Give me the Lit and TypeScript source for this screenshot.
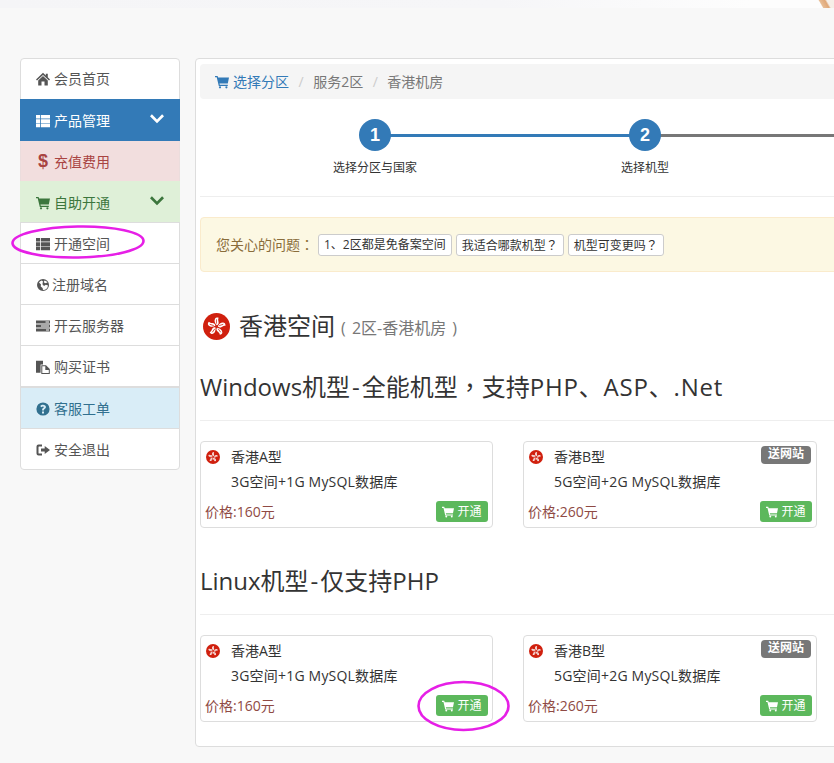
import { LitElement, html, css, svg } from "lit";
import { customElement } from "lit/decorators.js";

const ic = (vb: string, body: unknown, cls = "ic") =>
  html`<svg class=${cls} viewBox=${vb} fill="currentColor" aria-hidden="true">${body}</svg>`;

const icons: Record<string, unknown> = {
  home: svg`<path d="M7 .8 L9.8 3.4 V1.8 H11.8 V5.3 L14 7.4 L13 8.5 L7 2.9 L1 8.5 L0 7.4 Z"/><path d="M2.2 8.6 L7 4.1 L11.8 8.6 V13.4 H8.5 V9.6 H5.5 V13.4 H2.2 Z"/>`,
  thl: svg`<path d="M0 1h4.2v3.6H0zM5 1h9v3.6H5zM0 5.3h4.2v3.6H0zM5 5.3h9v3.6H5zM0 9.6h4.2v3.6H0zM5 9.6h9v3.6H5z"/>`,
  cart: svg`<path d="M0 1h2.6l.5 1.6H14l-1.2 6H4.5l.3 1.2h8v1.2H3.8L1.7 2.2H0z"/><circle cx="5" cy="12.3" r="1.1"/><circle cx="11.4" cy="12.3" r="1.1"/>`,
  globe: svg`<path fill-rule="evenodd" d="M7 1a6 6 0 1 0 0 12A6 6 0 0 0 7 1zM8.6 2.6 7.7 4 9 5.2l2.6-.6a5 5 0 0 0-3-2zM3 4.4 5 6.4 4.7 8.6 6.6 10l.4 2A5 5 0 0 0 12 7.6L9.8 6.8 8 8 6.4 6.2 7 3.6 5.8 2.4A5 5 0 0 0 3 4.4z"/>`,
  tasks: svg`<path fill-rule="evenodd" d="M0 1.6h14v3H0zM9.5 2.6v1h3.5v-1zM0 5.6h14v3H0zM5 6.6v1h8v-1zM0 9.6h14v3H0zM10 10.6v1h3v-1z"/>`,
  dup: svg`<path d="M0 .8h7V4.6H4.6v8.2H0z"/><path fill-rule="evenodd" d="M5.3 5.2H10L13.8 9v5H5.3zM6.3 6.2v6.8h6.5V9.9H9.3V6.2z"/>`,
  question: svg`<path fill-rule="evenodd" d="M7 .4a6.6 6.6 0 1 0 0 13.2A6.6 6.6 0 0 0 7 .4zM6 9.6h2v1.8H6zM7 2.8c1.7 0 2.9.9 2.9 2.3 0 1-.6 1.5-1.2 2-.5.3-.8.6-.8 1.1V8.6H6.1v-.6c0-1 .5-1.5 1-1.9.4-.3.8-.5.8-1 0-.4-.4-.7-.9-.7-.6 0-1.1.3-1.6.9L4.2 4.1C5 3.2 5.9 2.8 7 2.8z"/>`,
  logout: svg`<path d="M6 1.5H2.5A2 2 0 0 0 .5 3.5v7a2 2 0 0 0 2 2H6v-2H3a.5.5 0 0 1-.5-.5V4a.5.5 0 0 1 .5-.5h3z"/><path d="M8.7 3 14 7 8.7 11V8.6H5V5.4h3.7z"/>`,
  chev: svg`<path d="M1.9 3.3 0 5.2l7 7 7-7-1.9-1.9L7 8.4z"/>`,
};
const icon = (n: string, cls = "ic") => ic("0 0 14 14", icons[n], cls);

const petal = svg`<path d="M51 45 C44 38 40 28 45 20 C47 16 53 15 58 18 C54 24 58 30 58 36 C58 41 55 44 51 45Z" fill="#fff"/><path d="M50 38 L50 25" stroke="#c8200c" stroke-width="2.6" stroke-linecap="round"/>`;
const flag = (cls: string) => html`<svg class=${cls} viewBox="0 0 100 100" aria-hidden="true">
  <circle cx="50" cy="50" r="50" fill="#d0200e"/>
  ${[0, 72, 144, 216, 288].map((r) => svg`<g transform="rotate(${r} 50 50)">${petal}</g>`)}
</svg>`;

@customElement("app-root")
export class AppRoot extends LitElement {
  static styles = css`
    :host {
      display: block;
      position: relative;
      width: 834px;
      height: 763px;
      overflow: hidden;
      background: #f8f8f8;
      color: #333;
      font: 14px/20px "Open Sans", "Noto Sans CJK SC", sans-serif;
    }
    * { box-sizing: border-box; }
    .ic { width: 14px; height: 14px; flex: none; display: block; }
    .fw { font-family: "Noto Sans CJK TC", sans-serif; }
    .topstrip {
      height: 8px;
      background: linear-gradient(90deg, #f5f5f7 0%, #f6f6f8 60%, #fdfdfd 90%);
      position: relative;
    }
    .peach {
      position: absolute;
      right: 0;
      top: 0;
      width: 20px;
      height: 8px;
      background: linear-gradient(60deg, #fdfdfd 35%, #e8bd95 40%, #e0a878 62%, #f6efe8 70%);
    }
    .layout {
      display: flex;
      align-items: flex-start;
      padding: 50px 0 0 20px;
      gap: 15px;
    }
    .side { width: 160px; flex: none; }
    .item {
      display: flex;
      align-items: center;
      gap: 4px;
      height: 42px;
      margin-bottom: -1px;
      padding: 0 15px;
      border: 1px solid #ddd;
      background: #fff;
      color: #555;
      position: relative;
    }
    .item + .item { padding-top: 1px; }
    .item:first-child { border-radius: 4px 4px 0 0; }
    .item:last-child { border-radius: 0 0 4px 4px; margin-bottom: 0; }
    .item .chev { margin-left: auto; align-self: flex-start; margin-top: 10px; }
    .item.tight { gap: 2px; }
    .primary { background: #337ab7; border-color: #337ab7; color: #fff; z-index: 1; }
    .danger { background: #f2dede; border-color: #ebdddd; color: #a94442; }
    .success { background: #dff0d8; border-color: #dff0d8; color: #3c763d; }
    .info { background: #d9edf7; color: #31708f; margin-top: 1px; }
    .usd { width: 14px; text-align: center; font-size: 18px; font-weight: 700; font-family: "Liberation Sans", sans-serif; line-height: 20px; margin-top: -2px; }

    .panel {
      width: 720px;
      flex: none;
      height: 689px;
      background: #fff;
      border: 1px solid #ddd;
      border-radius: 4px;
      padding: 5px 4px;
    }
    .crumb {
      display: flex;
      align-items: center;
      height: 35px;
      padding: 0 15px;
      background: #f5f5f5;
      border-radius: 4px;
      color: #777;
    }
    .crumb .link { display: flex; align-items: center; gap: 4px; color: #337ab7; }
    .crumb .sep { color: #ccc; padding: 0 9.5px; }
    .steps { display: flex; padding: 20px 0 0 40px; height: 98px; border-bottom: 1px solid #eee; }
    .step { width: 270px; flex: none; display: flex; flex-direction: column; align-items: center; position: relative; }
    .line { position: absolute; top: 14.5px; left: 135px; width: 270px; height: 3px; background: #337ab7; }
    .line.off { background: #777; }
    .num {
      width: 32px;
      height: 32px;
      border-radius: 50%;
      background: #337ab7;
      color: #fff;
      font: bold 18px/32px "Liberation Sans", sans-serif;
      text-align: center;
      position: relative;
    }
    .lab { font-size: 12px; line-height: 20px; margin-top: 7px; color: #333; }
    .alert {
      display: flex;
      align-items: center;
      gap: 4px;
      margin-top: 20px;
      height: 55px;
      padding: 0 15px;
      background: #fcf8e3;
      border: 1px solid #faebcc;
      border-radius: 4px;
      color: #8a6d3b;
    }
    .q { display: flex; gap: 4px; }
    .q > span {
      height: 22px;
      padding: 0 5px;
      font-size: 12px;
      line-height: 20px;
      background: #fff;
      border: 1px solid #ccc;
      border-radius: 3px;
      color: #333;
      white-space: nowrap;
    }
    .title { display: flex; align-items: center; margin-top: 37px; padding-left: 3px; height: 34px; }
    .bigflag { width: 27px; height: 27px; flex: none; margin-right: 9px; }
    .title b { font-weight: 400; font-size: 24px; line-height: 34px; color: #333; }
    .title small { font-size: 16px; color: #777; margin-left: 6px; padding-top: 4px; word-spacing: 2px; }
    h3 {
      margin: 0;
      font-weight: 400;
      font-size: 24px;
      line-height: 34px;
      color: #333;
      padding-bottom: 16px;
      border-bottom: 1px solid #eee;
    }
    h3.win { margin-top: 26px; }
    h3.lin { margin-top: 36px; }
    h3 .hy { padding: 0 2px; }
    h3 .tail { letter-spacing: 0.8px; }
    .cards { display: flex; gap: 30px; margin-top: 20px; }
    .card {
      width: 293px;
      height: 87px;
      flex: none;
      border: 1px solid #ddd;
      border-radius: 4px;
      padding: 4px 4px 5px 4px;
      display: flex;
      flex-direction: column;
      position: relative;
    }
    .card + .card { width: 294px; }
    .name { display: flex; align-items: center; height: 20px; margin-top: 1px; }
    .smallflag { width: 14px; height: 14px; flex: none; margin: 0 11px 0 1px; }
    .spec { padding-left: 26px; margin-top: 5px; height: 20px; letter-spacing: 0.2px; }
    .foot { display: flex; align-items: center; justify-content: space-between; margin-top: auto; }
    .price { color: #8f4a44; }
    .buy {
      display: flex;
      align-items: center;
      justify-content: center;
      gap: 3px;
      width: 52px;
      height: 21px;
      background: #5cb85c;
      border-radius: 3px;
      color: #fff;
      font-size: 12px;
      line-height: 18px;
    }
    .buy .ic { width: 12px; height: 12px; }
    .badge {
      position: absolute;
      top: 4px;
      right: 5px;
      width: 50px;
      height: 18px;
      background: #777;
      border-radius: 4px;
      color: #fff;
      font-size: 12px;
      font-weight: 700;
      line-height: 16px;
      text-align: center;
    }
    .marks { position: absolute; left: 0; top: 0; width: 834px; height: 763px; pointer-events: none; }
  `;

  private card(name: string, spec: string, price: string, badge: boolean) {
    return html`<div class="card">
      ${badge ? html`<span class="badge">送网站</span>` : ""}
      <div class="name">${flag("smallflag")}<span>${name}</span></div>
      <div class="spec">${spec}</div>
      <div class="foot">
        <span class="price">价格:${price}元</span>
        <span class="buy">${icon("cart")}开通</span>
      </div>
    </div>`;
  }

  private cards() {
    return html`<div class="cards">
      ${this.card("香港A型", "3G空间+1G MySQL数据库", "160", false)}
      ${this.card("香港B型", "5G空间+2G MySQL数据库", "260", true)}
    </div>`;
  }

  render() {
    return html`
      <div class="topstrip"><div class="peach"></div></div>
      <div class="layout">
        <nav class="side">
          <div class="item">${icon("home")}会员首页</div>
          <div class="item primary">${icon("thl")}产品管理${icon("chev", "ic chev")}</div>
          <div class="item danger"><span class="usd">$</span>充值费用</div>
          <div class="item success">${icon("cart")}自助开通${icon("chev", "ic chev")}</div>
          <div class="item">${icon("thl")}开通空间</div>
          <div class="item tight">${icon("globe")}注册域名</div>
          <div class="item">${icon("tasks")}开云服务器</div>
          <div class="item">${icon("dup")}购买证书</div>
          <div class="item info">${icon("question")}客服工单</div>
          <div class="item">${icon("logout")}安全退出</div>
        </nav>
        <main class="panel">
          <div class="crumb">
            <span class="link">${icon("cart")}选择分区</span>
            <span class="sep">/</span>
            <span>服务2区</span>
            <span class="sep">/</span>
            <span>香港机房</span>
          </div>
          <div class="steps">
            <div class="step"><div class="line"></div><div class="num">1</div><div class="lab">选择分区与国家</div></div>
            <div class="step"><div class="line off"></div><div class="num">2</div><div class="lab">选择机型</div></div>
          </div>
          <div class="alert">
            <span>您关心的问题<span class="fw">：</span></span>
            <div class="q"><span>1、2区都是免备案空间</span><span>我适合哪款机型<span class="fw">？</span></span><span>机型可变更吗<span class="fw">？</span></span></div>
          </div>
          <div class="title">${flag("bigflag")}<b>香港空间</b><small>( 2区-香港机房 )</small></div>
          <h3 class="win">Windows机型<span class="hy">-</span>全能机型<span class="fw">，</span>支持<span class="tail">PHP、ASP、.Net</span></h3>
          ${this.cards()}
          <h3 class="lin">Linux机型<span class="hy">-</span>仅支持PHP</h3>
          ${this.cards()}
        </main>
      </div>
      <svg class="marks" viewBox="0 0 834 763" fill="none" stroke="#e61fe6" stroke-width="2.6" aria-hidden="true">
        <ellipse cx="78" cy="242" rx="65.5" ry="15.5" transform="rotate(-1 78 242)" />
        <ellipse cx="463.5" cy="706" rx="45" ry="24" />
      </svg>
    `;
  }
}
